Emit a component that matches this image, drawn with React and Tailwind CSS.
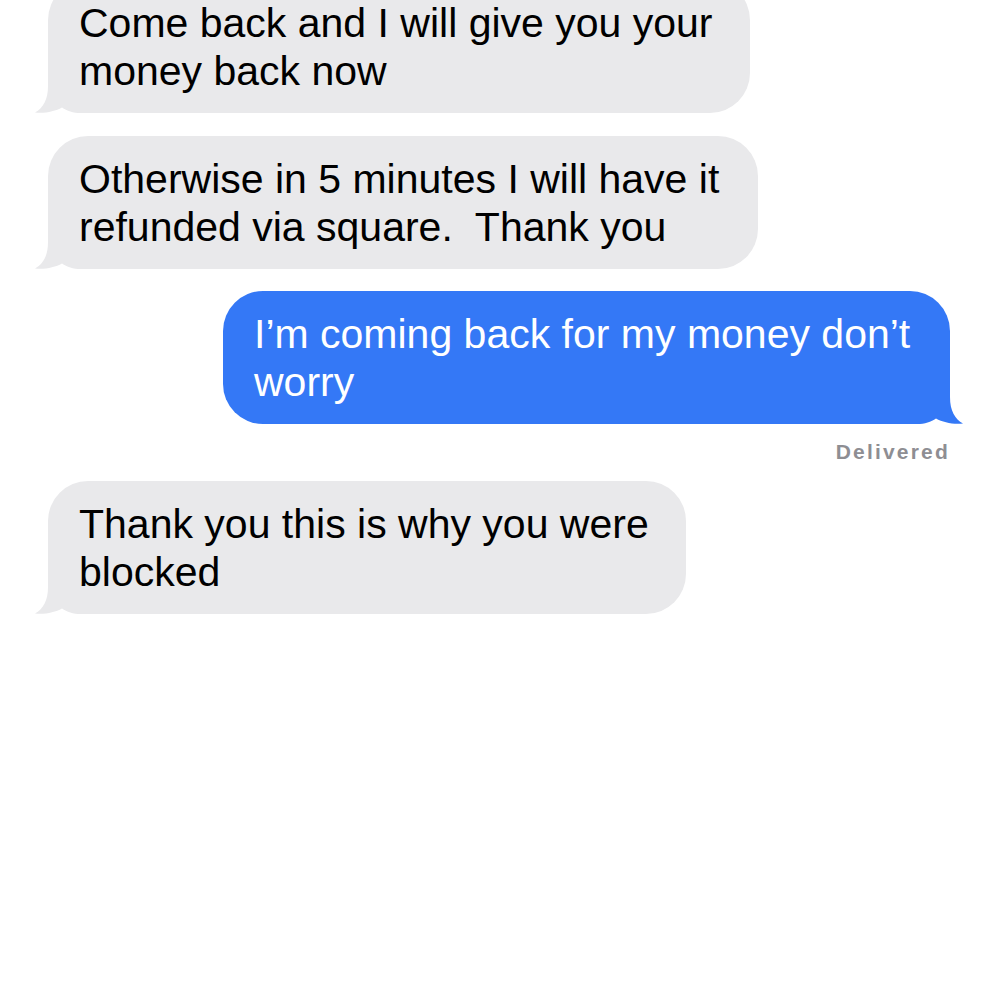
import React from "react";

function Tail({ color, side }) {
  const pos = side === "left" ? "left-[-13px]" : "right-[-13px] -scale-x-100";
  return (
    <svg
      className={`absolute bottom-0 ${pos} w-[55px] h-[45px]`}
      viewBox="0 0 55 45"
    >
      <path
        d="M13 0 L13 18 C13 32 8 40 0 44.5 C10 45.5 20 43.5 27 39.5 C32 43 38 45 46 45 L55 45 L55 0 Z"
        fill={color}
      />
    </svg>
  );
}

function Bubble({ lines, width, sent, className = "" }) {
  const color = sent ? "#3478f6" : "#e9e9eb";
  return (
    <div
      className={`relative rounded-[40px] pl-[31px] pt-[19px] pb-[18px] text-[41px] leading-[48px] whitespace-pre ${
        sent ? "bg-[#3478f6] text-white" : "bg-[#e9e9eb] text-black"
      } ${width} ${className}`}
    >
      <Tail color={color} side={sent ? "right" : "left"} />
      <div className="relative">
        {lines.map((l, i) => (
          <div key={i}>{l}</div>
        ))}
      </div>
    </div>
  );
}

export default function App() {
  return (
    <div className="w-[1000px] h-[1000px] overflow-hidden bg-white font-['Liberation_Sans',Arial,sans-serif]">
      <div className="flex flex-col -mt-[20px]">
        <Bubble
          className="ml-[48px] self-start"
          width="w-[702px]"
          lines={["Come back and I will give you your", "money back now"]}
        />
        <Bubble
          className="ml-[48px] mt-[23px] self-start"
          width="w-[710px]"
          lines={["Otherwise in 5 minutes I will have it", "refunded via square.  Thank you"]}
        />
        <Bubble
          sent
          className="mr-[50px] mt-[22px] self-end"
          width="w-[727px]"
          lines={["I\u2019m coming back for my money don\u2019t", "worry"]}
        />
        <div className="self-end mr-[50px] mt-[16px] text-[21px] leading-[24px] font-bold tracking-[2.2px] text-[#8e8e93]">
          Delivered
        </div>
        <Bubble
          className="ml-[48px] mt-[17px] self-start"
          width="w-[638px]"
          lines={["Thank you this is why you were", "blocked"]}
        />
      </div>
    </div>
  );
}
